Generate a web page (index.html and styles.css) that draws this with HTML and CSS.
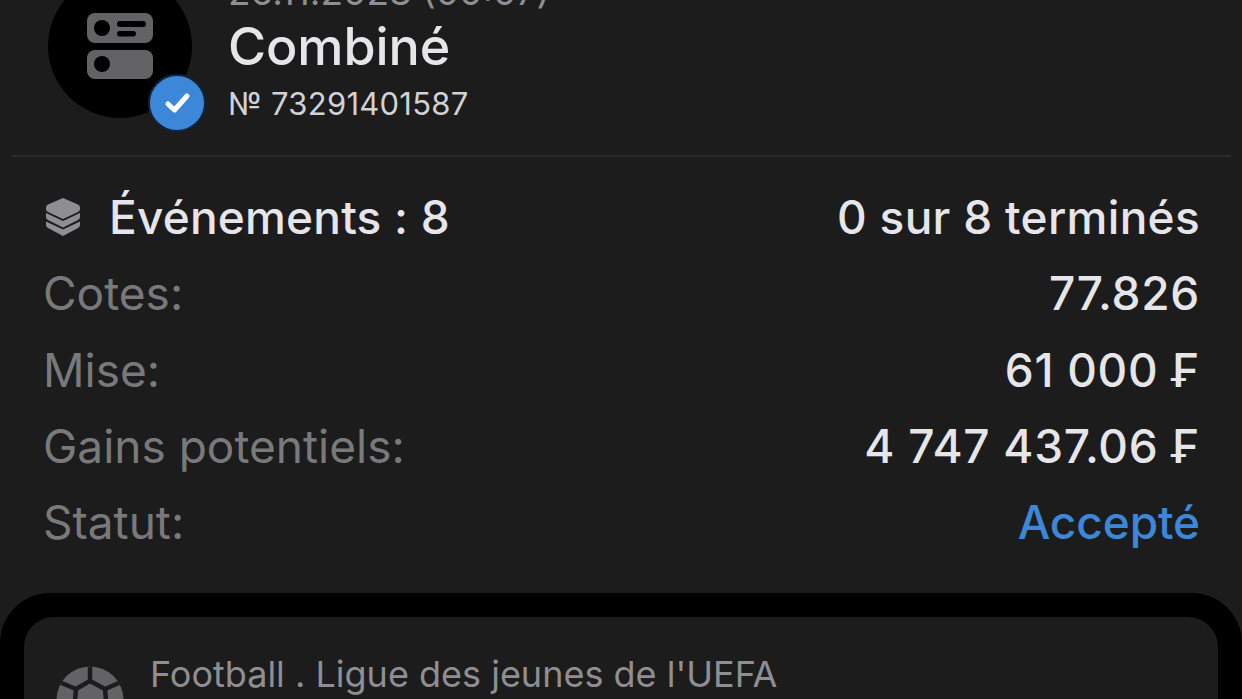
FILE: index.html
```html
<!DOCTYPE html>
<html lang="fr">
<head>
<meta charset="utf-8">
<title>Combiné</title>
<link rel="stylesheet" href="styles.css">
</head>
<body>
<main class="page">
  <header class="head">
    <div class="avatar">
      <svg class="avatar-icon" width="66" height="66" viewBox="0 0 66 66">
        <rect x="0" y="0" width="66" height="30" rx="8" fill="#636366"/>
        <circle cx="15" cy="15" r="8" fill="#000"/>
        <rect x="30" y="8" width="29" height="6" rx="3" fill="#000"/>
        <rect x="30" y="18" width="19" height="5.500" rx="2.700" fill="#000"/>
        <rect x="0" y="37" width="66" height="29" rx="8" fill="#636366"/>
        <circle cx="15" cy="51" r="8" fill="#000"/>
      </svg>
      <span class="badge">
        <svg width="28" height="24" viewBox="0 0 28 24"><path d="M5 13 L11.500 19 L24 5" fill="none" stroke="#fff" stroke-width="5" stroke-linecap="round" stroke-linejoin="round"/></svg>
      </span>
    </div>
    <div class="head-text">
      <div class="date">26.11.2023 (00:07)</div>
      <div class="title">Combiné</div>
      <div class="number">№ 73291401587</div>
    </div>
  </header>
  <hr class="divider">
  <section class="rows">
    <div class="row">
      <span class="label-strong">
        <svg class="layers" width="34" height="38" viewBox="0 0 34 38">
          <path d="M17 0 L32 6.500 Q34 7.500 34 9.500 V11 Q34 13 32 14 L17 21 L2 14 Q0 13 0 11 V9.500 Q0 7.500 2 6.500 Z" fill="#8e8e93"/>
          <path d="M0 15 L17 23 L34 15 V19 Q34 21 32 22 L17 29.500 L2 22 Q0 21 0 19 Z" fill="#8e8e93"/>
          <path d="M0 23.500 L17 31.500 L34 23.500 V27 Q34 29 32 30 L17 38 L2 30 Q0 29 0 27 Z" fill="#8e8e93"/>
        </svg>
        Événements : 8
      </span>
      <span class="value">0 sur 8 terminés</span>
    </div>
    <div class="row"><span class="label">Cotes:</span><span class="value num">77.826</span></div>
    <div class="row"><span class="label">Mise:</span><span class="value num">61 000 ₣</span></div>
    <div class="row"><span class="label">Gains potentiels:</span><span class="value num">4 747 437.06 ₣</span></div>
    <div class="row"><span class="label">Statut:</span><span class="value accent">Accepté</span></div>
  </section>
  <section class="panel">
    <article class="card">
      <svg class="ball" width="68" height="68" viewBox="0 0 68 68">
        <defs><clipPath id="ball-clip"><circle cx="34" cy="34" r="33.500"/></clipPath></defs>
        <circle cx="34" cy="34" r="33.500" fill="#636366"/>
        <g clip-path="url(#ball-clip)" fill="none" stroke="#1c1c1c" stroke-width="4.500">
          <path d="M34 0 V15 L20 23 L3 16 M34 15 L49 23 L65 16 M20 23 L18 46 M49 23 L51 46"/>
        </g>
      </svg>
      <div class="card-title">Football . Ligue des jeunes de l'UEFA</div>
    </article>
  </section>
</main>
</body>
</html>
```
FILE: styles.css
```css
* { box-sizing: border-box; }
html, body { margin: 0; padding: 0; background: #1c1c1c; }
.page {
  width: 1242px;
  height: 699px;
  overflow: hidden;
  background: #1c1c1c;
  font-family: Inter, "Liberation Sans", sans-serif;
  color: #e5e5ea;
}
.head {
  display: flex;
  gap: 36px;
  margin-top: -26px;
  padding-left: 48px;
  height: 181px;
}
.avatar {
  position: relative;
  flex: none;
  width: 144px;
  height: 144px;
  border-radius: 50%;
  background: #000;
  display: flex;
  align-items: center;
  justify-content: center;
}
.badge {
  position: absolute;
  left: 100px;
  top: 100px;
  width: 58px;
  height: 58px;
  border: 2px solid #12233a;
  border-radius: 50%;
  background: #3d87d9;
  display: flex;
  align-items: center;
  justify-content: center;
}
.head-text { display: flex; flex-direction: column; }
.date { font-size: 37px; line-height: 36px; color: #8e8e93; height: 36px; }
.title { font-size: 52px; line-height: 60px; font-weight: 500; letter-spacing: -.1px; margin-top: 7px; }
.number { font-size: 31px; line-height: 36px; letter-spacing: .25px; color: #d1d1d6; margin-top: 9px; }
.divider {
  margin: 0 11px 0 12px;
  border: 0;
  height: 2px;
  background: #2a2a2c;
}
.rows {
  padding: 22px 42px 0 44px;
  display: flex;
  flex-direction: column;
}
.row {
  display: flex;
  justify-content: space-between;
  align-items: center;
  height: 76.300px;
  font-size: 46px;
  font-weight: 500;
  letter-spacing: .3px;
}
.label-strong { display: flex; align-items: center; gap: 29px; letter-spacing: .2px; }
.layers { flex: none; margin-left: 2px; }
.label { color: #79797c; font-weight: 400; letter-spacing: 0; margin-left: -1px; }
.value { color: #e5e5ea; }
.num { letter-spacing: .7px; }
.accent { color: #3d87d9; letter-spacing: -.1px; }
.panel {
  margin-top: 33px;
  background: #000;
  border-radius: 50px 50px 0 0;
  padding: 24px 24px 0;
  height: 200px;
}
.card {
  position: relative;
  background: #1c1c1c;
  border-radius: 30px 30px 0 0;
  height: 176px;
  display: flex;
  gap: 26px;
  padding: 35px 0 0 32px;
}
.ball { flex: none; margin-top: 14px; }
.card-title { font-size: 36px; line-height: 44px; color: #8e8e93; }
```
